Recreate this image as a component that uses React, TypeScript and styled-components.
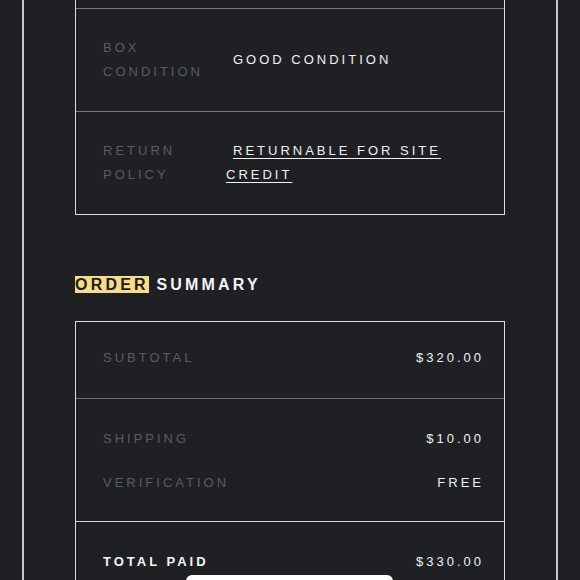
import React from "react";
import styled, { createGlobalStyle } from "styled-components";

const Global = createGlobalStyle`
  html, body {
    margin: 0;
    padding: 0;
    background: #1f2023;
    height: 100%;
    overflow: hidden;
  }
  body {
    font-family: "Liberation Sans", Arial, Helvetica, sans-serif;
    -webkit-font-smoothing: antialiased;
  }
`;

const Frame = styled.div`
  margin: 0 22px;
  height: 580px;
  border-left: 2px solid #c9c9cb;
  border-right: 2px solid #c9c9cb;
  padding: 0 51px;
  box-sizing: border-box;
  background: #1f2023;
`;

const Box = styled.div<{ $cut?: boolean }>`
  border: 1.5px solid #dcdcde;
  border-top: ${(p) => (p.$cut ? "none" : "1.5px solid #dcdcde")};
  padding-top: ${(p) => (p.$cut ? "8px" : "0")};
`;

const DetailRow = styled.div`
  display: grid;
  grid-template-columns: 110px 1fr;
  column-gap: 13px;
  align-items: center;
  padding: 27px 20px 27px 27px;
  border-top: 1.5px solid #77787b;
  font-size: 13px;
  line-height: 24px;
  letter-spacing: 3px;
`;

const Label = styled.div`
  color: #5a5c60;
  text-transform: uppercase;
`;

const Value = styled.div`
  color: #f1f1f1;
  text-indent: 7px;
`;

const Link = styled.a`
  color: #f1f1f1;
  text-decoration: underline;
  text-decoration-thickness: 1px;
  text-underline-offset: 3px;
`;

const Heading = styled.h2`
  margin: 60px 0 26px;
  font-size: 16px;
  line-height: 20px;
  letter-spacing: 3.2px;
  font-weight: 700;
  color: #f4f4f4;
`;

const Mark = styled.span`
  background: #f7dc8c;
  color: #1d1d1d;
`;

const SummaryRow = styled.div<{ $border?: string; $first?: boolean }>`
  display: flex;
  flex-direction: column;
  gap: 24px;
  padding: ${(p) => (p.$first ? "26px 20px 30px 27px" : "30px 20px 28px 27px")};
  border-top: ${(p) => (p.$border ? `1.5px solid ${p.$border}` : "none")};
  font-size: 13px;
  line-height: 20px;
  letter-spacing: 3px;
`;

const Line = styled.div`
  display: flex;
  justify-content: space-between;
  align-items: center;
`;

const SumLabel = styled.span<{ $strong?: boolean }>`
  color: ${(p) => (p.$strong ? "#f4f4f4" : "#5a5c60")};
  font-weight: ${(p) => (p.$strong ? 700 : 400)};
`;

const SumValue = styled.span`
  color: #f1f1f1;
`;

const BottomTab = styled.div`
  position: fixed;
  left: 186px;
  bottom: -20px;
  width: 207px;
  height: 25px;
  background: #ffffff;
  border-radius: 6px 6px 0 0;
`;

export default function App() {
  return (
    <>
      <Global />
      <Frame>
        <Box $cut>
          <DetailRow>
            <Label>Box Condition</Label>
            <Value>GOOD CONDITION</Value>
          </DetailRow>
          <DetailRow>
            <Label>Return Policy</Label>
            <Value>
              <Link href="#">RETURNABLE FOR SITE CREDIT</Link>
            </Value>
          </DetailRow>
        </Box>

        <Heading>
          <Mark>ORDER</Mark> SUMMARY
        </Heading>

        <Box>
          <SummaryRow $first>
            <Line>
              <SumLabel>SUBTOTAL</SumLabel>
              <SumValue>$320.00</SumValue>
            </Line>
          </SummaryRow>
          <SummaryRow $border="#6b6c6f">
            <Line>
              <SumLabel>SHIPPING</SumLabel>
              <SumValue>$10.00</SumValue>
            </Line>
            <Line>
              <SumLabel>VERIFICATION</SumLabel>
              <SumValue>FREE</SumValue>
            </Line>
          </SummaryRow>
          <SummaryRow $border="#d4d4d6">
            <Line>
              <SumLabel $strong>TOTAL PAID</SumLabel>
              <SumValue>$330.00</SumValue>
            </Line>
          </SummaryRow>
        </Box>
      </Frame>
      <BottomTab />
    </>
  );
}
